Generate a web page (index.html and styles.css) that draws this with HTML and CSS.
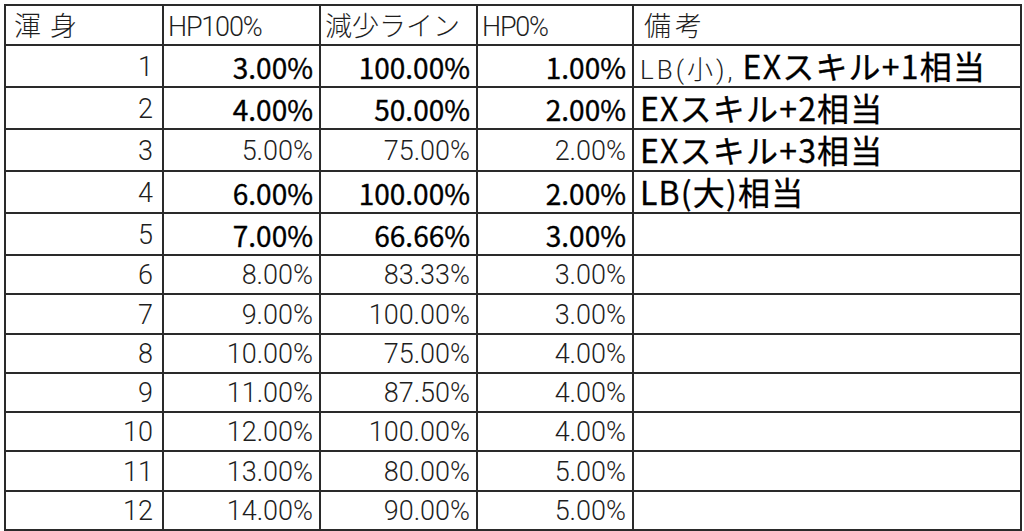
FILE: index.html
```html
<!DOCTYPE html>
<html lang="ja">
<head>
<meta charset="utf-8">
<title>渾身</title>
<link rel="stylesheet" href="styles.css">
</head>
<body>
<div class="sheet">
<table class="grid">
  <colgroup>
    <col class="c1"><col class="c2"><col class="c3"><col class="c4"><col class="c5">
  </colgroup>
  <tr class="hdr">
    <td class="thin left"><span class="wide">渾身</span></td>
    <td class="thin left latin">HP100%</td>
    <td class="thin left">減少ライン</td>
    <td class="thin left latin">HP0%</td>
    <td class="thin left"><span class="wide2">備考</span></td>
  </tr>
  <tr class="big">
    <td class="thin num first">1</td>
    <td class="bold num">3.00%</td>
    <td class="bold num">100.00%</td>
    <td class="bold num">1.00%</td>
    <td class="note"><span class="thin lb">LB(小),</span> <span class="boldj">EXスキル+1相当</span></td>
  </tr>
  <tr class="big">
    <td class="thin num first">2</td>
    <td class="bold num">4.00%</td>
    <td class="bold num">50.00%</td>
    <td class="bold num">2.00%</td>
    <td class="note"><span class="boldj">EXスキル+2相当</span></td>
  </tr>
  <tr class="big">
    <td class="thin num first">3</td>
    <td class="thin num">5.00%</td>
    <td class="thin num">75.00%</td>
    <td class="thin num">2.00%</td>
    <td class="note"><span class="boldj">EXスキル+3相当</span></td>
  </tr>
  <tr class="big">
    <td class="thin num first">4</td>
    <td class="bold num">6.00%</td>
    <td class="bold num">100.00%</td>
    <td class="bold num">2.00%</td>
    <td class="note"><span class="boldj">LB(大)相当</span></td>
  </tr>
  <tr class="big">
    <td class="thin num first">5</td>
    <td class="bold num">7.00%</td>
    <td class="bold num">66.66%</td>
    <td class="bold num">3.00%</td>
    <td class="note"></td>
  </tr>
  <tr class="sm"><td class="thin num first">6</td><td class="thin num">8.00%</td><td class="thin num">83.33%</td><td class="thin num">3.00%</td><td></td></tr>
  <tr class="sm"><td class="thin num first">7</td><td class="thin num">9.00%</td><td class="thin num">100.00%</td><td class="thin num">3.00%</td><td></td></tr>
  <tr class="sm"><td class="thin num first">8</td><td class="thin num">10.00%</td><td class="thin num">75.00%</td><td class="thin num">4.00%</td><td></td></tr>
  <tr class="sm"><td class="thin num first">9</td><td class="thin num">11.00%</td><td class="thin num">87.50%</td><td class="thin num">4.00%</td><td></td></tr>
  <tr class="sm"><td class="thin num first">10</td><td class="thin num">12.00%</td><td class="thin num">100.00%</td><td class="thin num">4.00%</td><td></td></tr>
  <tr class="sm"><td class="thin num first">11</td><td class="thin num">13.00%</td><td class="thin num">80.00%</td><td class="thin num">5.00%</td><td></td></tr>
  <tr class="sm"><td class="thin num first">12</td><td class="thin num">14.00%</td><td class="thin num">90.00%</td><td class="thin num">5.00%</td><td></td></tr>
</table>
</div>
</body>
</html>
```

FILE: styles.css
```css
html, body {
  margin: 0;
  padding: 0;
  background: #ffffff;
}

.sheet {
  padding: 4px 0 0 4px;
}

.grid {
  border-collapse: collapse;
  table-layout: fixed;
  width: 1016px;
}

.c1 { width: 158px; }
.c2 { width: 157px; }
.c3 { width: 157px; }
.c4 { width: 156px; }
.c5 { width: 388px; }

.grid td {
  box-sizing: border-box;
  border: 2px solid #2a2a2a;
  padding: 0 6px 5px 4px;
  vertical-align: bottom;
  white-space: nowrap;
  line-height: 1;
}

.hdr td { height: 40px; padding-bottom: 3px; }
.big td { height: 42px; padding-bottom: 5px; }
.sm td { height: 39.3px; padding-bottom: 4px; }

.thin {
  font-family: "Roboto", "Noto Sans CJK JP", sans-serif;
  font-weight: 300;
  font-size: 27px;
  color: #1e1e1e;
}

.latin { letter-spacing: -1.2px; }

.bold {
  font-family: "Noto Sans CJK JP", sans-serif;
  font-weight: 400;
  font-size: 28px;
  color: #000000;
  -webkit-text-stroke: 0.35px #000000;
}

.boldj {
  font-family: "Noto Sans CJK JP", sans-serif;
  font-weight: 400;
  font-size: 32px;
  letter-spacing: 1.2px;
  line-height: 1.1;
  color: #000000;
  -webkit-text-stroke: 0.3px #000000;
}

.num { text-align: right; }
.left { text-align: left; }
.grid td.first { padding-right: 9px; }

.wide { letter-spacing: 9px; margin-left: 4px; }
.wide2 { letter-spacing: 4px; margin-left: 6px; }

.lb { letter-spacing: 3px; font-size: 26px; }

.grid td.note {
  text-align: left;
  padding-left: 6px;
  padding-bottom: 3px;
  font-family: "Noto Sans CJK JP", sans-serif;
  font-size: 32px;
}
```
